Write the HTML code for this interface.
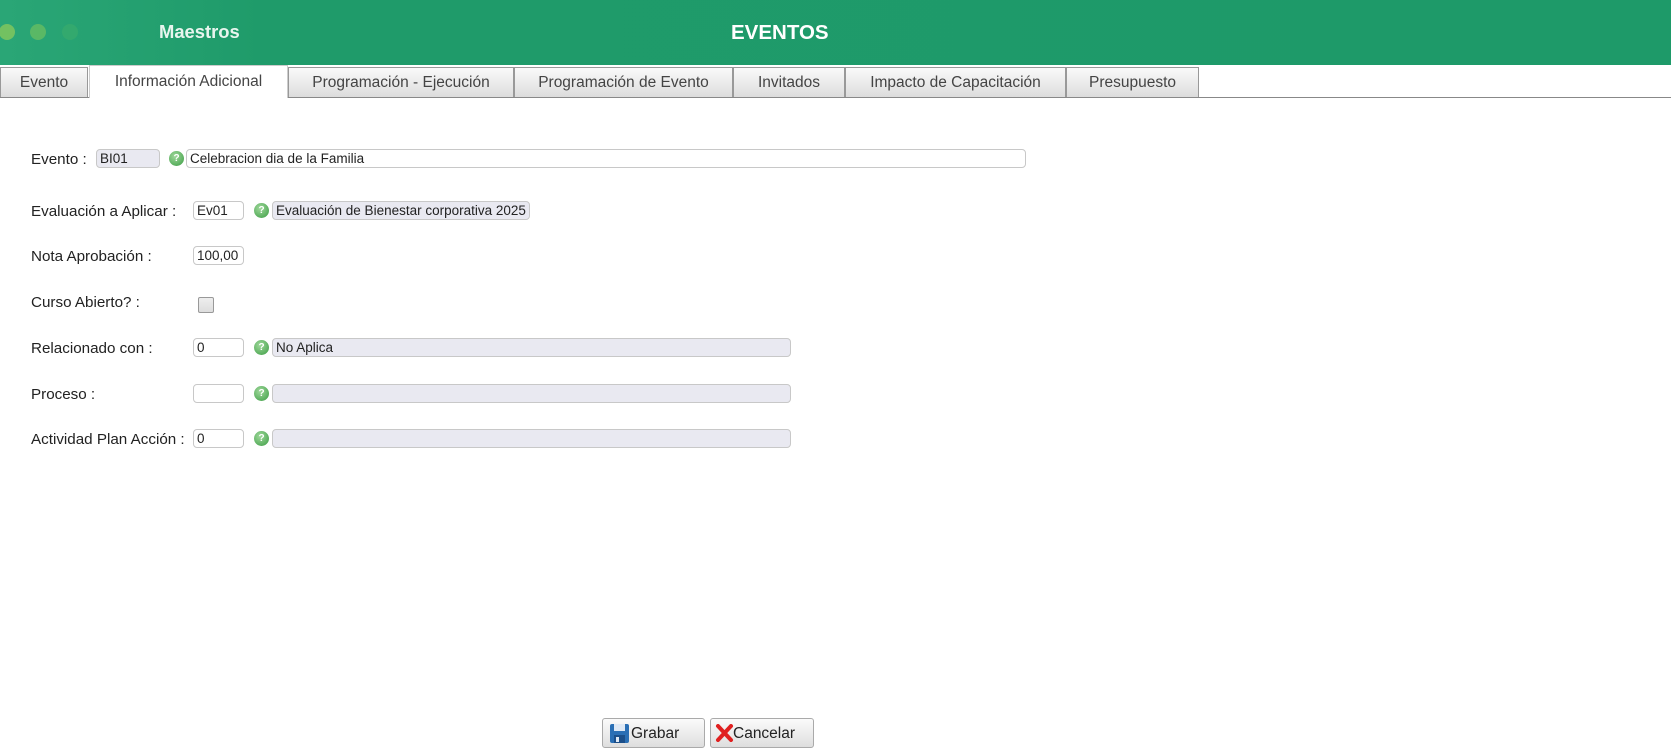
<!DOCTYPE html>
<html><head><meta charset="utf-8"><style>
*{box-sizing:border-box;margin:0;padding:0}
body{width:1671px;height:756px;background:#fff;font-family:"Liberation Sans",sans-serif;position:relative;overflow:hidden;color:#222}
.hdr{position:absolute;left:0;top:0;width:1671px;height:65px;background:linear-gradient(90deg,#2aa676 0,#1f9b6a 260px,#1e9a69 100%)}
.dot{position:absolute;top:24px;width:16px;height:16px;border-radius:50%}
.mae{position:absolute;left:159px;top:21px;font-weight:bold;font-size:18.4px;color:#e8f5ee}
.ev{position:absolute;left:731px;top:21px;color:#fff;font-weight:bold;font-size:20.5px}
.tab{position:absolute;top:67px;height:30px;border:1px solid #999;border-bottom:none;background:linear-gradient(#fafafa,#dcdcdc);font-size:15.5px;color:#444;text-align:center;line-height:30px;white-space:nowrap}
.tab.act{background:#fff;border-color:#ccc;top:65px;height:33px;line-height:32px}
.line{position:absolute;left:0;top:97px;width:1671px;height:1px;background:#888}
.lbl{position:absolute;left:31px;font-size:15.2px;color:#222}
.in{position:absolute;height:19px;border:1px solid #c8c8c8;border-radius:4px;font-size:13.5px;line-height:17px;padding-left:3px;background:#fff;white-space:nowrap;overflow:hidden}
.g{background:#e9e9f1}
.ic{position:absolute;width:15px;height:15px;border-radius:50%;background:radial-gradient(circle at 40% 35%,#9fd89b,#3b9c43);color:#fff;font-size:10px;font-weight:bold;text-align:center;line-height:15px}
.btn{position:absolute;top:718px;height:30px;border:1px solid #aaa;border-radius:3px;background:linear-gradient(#fbfbfb,#dedede);font-size:15.5px;line-height:29px;padding-left:28px;color:#222}
</style></head><body>
<div class="hdr">
<div class="dot" style="left:-1px;background:#86c85c;opacity:.8"></div>
<div class="dot" style="left:30px;background:#6fc060;opacity:.7"></div>
<div class="dot" style="left:62px;background:#3cad6a;opacity:.6"></div>
<div class="mae">Maestros</div>
<div class="ev">EVENTOS</div>
</div>
<div class="line"></div>
<div class="tab" style="left:0;width:88px">Evento</div>
<div class="tab act" style="left:89px;width:199px">Información Adicional</div>
<div class="tab" style="left:288px;width:226px">Programación - Ejecución</div>
<div class="tab" style="left:514px;width:219px">Programación de Evento</div>
<div class="tab" style="left:733px;width:112px">Invitados</div>
<div class="tab" style="left:845px;width:221px">Impacto de Capacitación</div>
<div class="tab" style="left:1066px;width:133px">Presupuesto</div>

<div class="lbl" style="top:151px">Evento :</div>
<div class="in g" style="left:96px;top:149px;width:64px">BI01</div>
<div class="ic" style="left:169px;top:151px">?</div>
<div class="in" style="left:186px;top:149px;width:840px">Celebracion dia de la Familia</div>

<div class="lbl" style="top:203px">Evaluación a Aplicar :</div>
<div class="in" style="left:193px;top:201px;width:51px">Ev01</div>
<div class="ic" style="left:254px;top:203px">?</div>
<div class="in g" style="left:272px;top:201px;width:258px">Evaluación de Bienestar corporativa 2025</div>

<div class="lbl" style="top:248px">Nota Aprobación :</div>
<div class="in" style="left:193px;top:246px;width:51px">100,00</div>

<div class="lbl" style="top:294px">Curso Abierto? :</div>
<div style="position:absolute;left:198px;top:297px;width:16px;height:16px;border:1px solid #999;border-radius:2px;background:linear-gradient(#eee,#ddd)"></div>

<div class="lbl" style="top:340px">Relacionado con :</div>
<div class="in" style="left:193px;top:338px;width:51px">0</div>
<div class="ic" style="left:254px;top:340px">?</div>
<div class="in g" style="left:272px;top:338px;width:519px">No Aplica</div>

<div class="lbl" style="top:386px">Proceso :</div>
<div class="in" style="left:193px;top:384px;width:51px"></div>
<div class="ic" style="left:254px;top:386px">?</div>
<div class="in g" style="left:272px;top:384px;width:519px"></div>

<div class="lbl" style="top:431px">Actividad Plan Acción :</div>
<div class="in" style="left:193px;top:429px;width:51px">0</div>
<div class="ic" style="left:254px;top:431px">?</div>
<div class="in g" style="left:272px;top:429px;width:519px"></div>

<div class="btn" style="left:602px;width:103px">
<svg style="position:absolute;left:6px;top:4px" width="21" height="21" viewBox="0 0 21 21"><rect x="1" y="1" width="19" height="19" rx="2" fill="#2a6fb5"/><rect x="5" y="1" width="11" height="7" fill="#dfe9f5"/><rect x="5" y="12" width="11" height="8" fill="#1b4f8a"/><rect x="7" y="14" width="3" height="5" fill="#dfe9f5"/></svg>Grabar</div>
<div class="btn" style="left:710px;width:104px;padding-left:22px">
<svg style="position:absolute;left:4px;top:5px" width="19" height="18" viewBox="0 0 19 18"><path d="M3 2 L16 16 M16 2 L3 16" stroke="#e02020" stroke-width="4" stroke-linecap="round"/></svg>Cancelar</div>
</body></html>
